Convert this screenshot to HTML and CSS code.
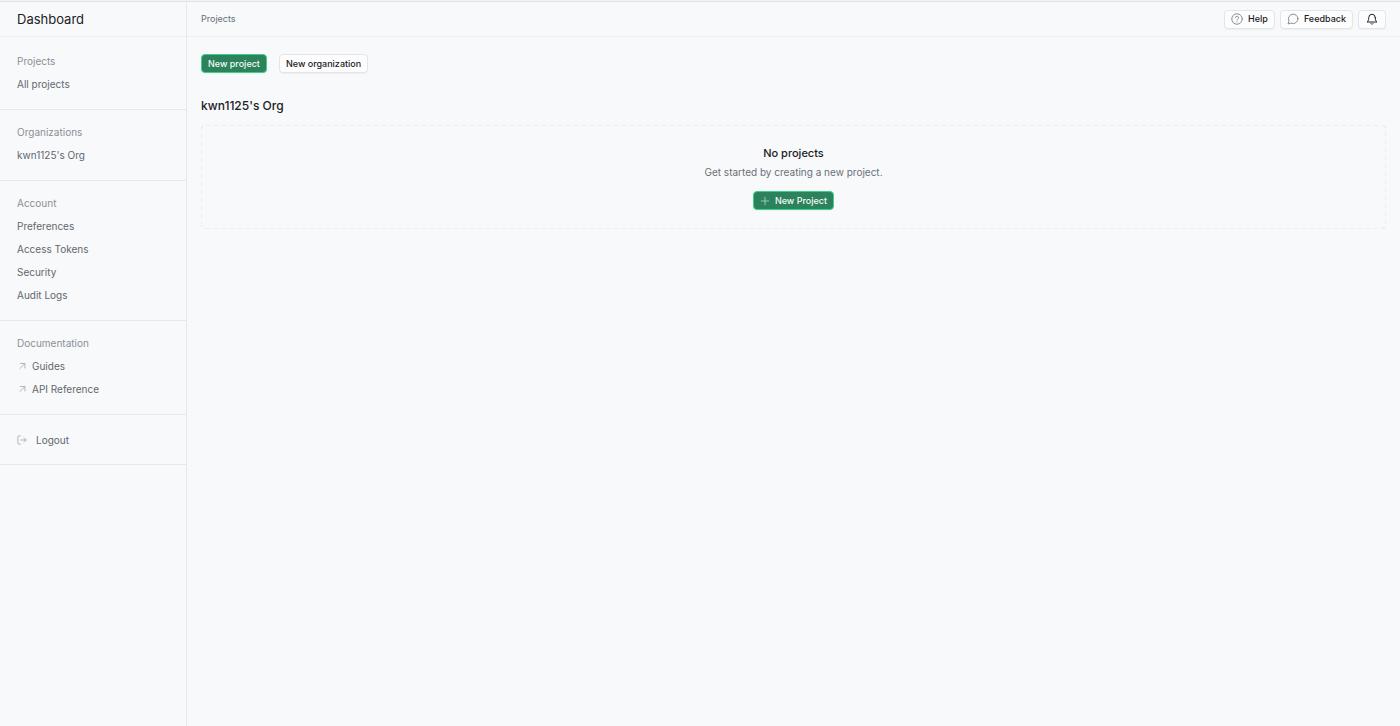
FILE: index.html
```html
<!DOCTYPE html>
<html lang="en">
<head>
<meta charset="utf-8">
<title>Projects</title>
<link rel="stylesheet" href="styles.css">
</head>
<body>
<div class="app">
  <aside class="sidebar">
    <h1 class="brand">Dashboard</h1>
    <nav>
      <section class="group group-first">
        <h2 class="group-title">Projects</h2>
        <a class="link" href="#">All projects</a>
      </section>
      <section class="group">
        <h2 class="group-title">Organizations</h2>
        <a class="link" href="#">kwn1125's Org</a>
      </section>
      <section class="group">
        <h2 class="group-title">Account</h2>
        <a class="link" href="#">Preferences</a>
        <a class="link" href="#">Access Tokens</a>
        <a class="link" href="#">Security</a>
        <a class="link" href="#">Audit Logs</a>
      </section>
      <section class="group">
        <h2 class="group-title">Documentation</h2>
        <a class="link link-out" href="#"><svg class="icon" width="10" height="10" viewBox="0 0 24 24"><path d="M7 18 19 6M8 6h11v11"/></svg>Guides</a>
        <a class="link link-out" href="#"><svg class="icon" width="10" height="10" viewBox="0 0 24 24"><path d="M7 18 19 6M8 6h11v11"/></svg>API Reference</a>
      </section>
      <section class="group group-last">
        <button class="link logout" type="button"><svg class="icon" width="10" height="10" viewBox="0 0 24 24"><path d="M8 22H5a3 3 0 0 1-3-3V5a3 3 0 0 1 3-3h3M17 17l5-5-5-5M22 12H9"/></svg>Logout</button>
      </section>
    </nav>
  </aside>
  <div class="page">
    <header class="topbar">
      <span class="crumb">Projects</span>
      <div class="actions">
        <button class="button" type="button"><svg class="icon icon-soft" width="12" height="12" viewBox="0 0 24 24"><circle cx="12" cy="12" r="10.5"/><path d="M9 9a3 3 0 0 1 6 1c0 2-3 2.500-3 4M12 17.500v.500"/></svg>Help</button>
        <button class="button" type="button"><svg class="icon icon-soft" width="12" height="12" viewBox="0 0 24 24"><path d="M22 11.500a9.500 9.500 0 0 1-9.500 9.500 10 10 0 0 1-4.500-1L2 22l2-6a9.500 9.500 0 1 1 18-4.500z"/></svg>Feedback</button>
        <button class="button button-icon" type="button" aria-label="Notifications"><svg class="icon" width="12" height="12" viewBox="0 0 24 24"><path d="M18.500 9a6.500 6.500 0 0 0-13 0c0 6-1.500 7.500-3.500 9h20c-2-1.500-3.500-3-3.500-9M10 21.500c1 1.500 3 1.500 4 0"/></svg></button>
      </div>
    </header>
    <main class="content">
      <div class="toolbar">
        <button class="button button-primary" type="button">New project</button>
        <button class="button" type="button">New organization</button>
      </div>
      <h2 class="org">kwn1125's Org</h2>
      <section class="empty">
        <svg class="outline" aria-hidden="true"><rect width="100%" height="100%" rx="5"/></svg>
        <h3 class="empty-title">No projects</h3>
        <p class="empty-text">Get started by creating a new project.</p>
        <button class="button button-primary" type="button"><svg class="icon icon-plus" width="10" height="10" viewBox="0 0 24 24"><path d="M12 3v18M3 12h18"/></svg>New Project</button>
      </section>
    </main>
  </div>
</div>
</body>
</html>
```
FILE: styles.css
```css
* { box-sizing: border-box; }
body {
  margin: 0;
  background: #f8f9fb;
  color: #1c2024;
  font-family: Inter, "Liberation Sans", sans-serif;
  font-size: 10px;
  line-height: 16px;
}
h1, h2, h3, p { margin: 0; font-weight: 500; }
button { font: inherit; cursor: pointer; }
.app {
  display: flex;
  min-height: 100vh;
  border-top: 1px solid #f1f2f4;
}
.sidebar {
  flex: 0 0 187px;
  border-right: 1px solid #e6e8eb;
  border-top: 1px solid #dfe1e3;
}
.brand {
  height: 35px;
  padding-left: 17px;
  border-bottom: 1px solid #eceef0;
  font-size: 13px;
  font-weight: 400;
  line-height: 34px;
}
.group {
  padding: 10px 17px 14px;
  border-bottom: 1px solid #e6e8eb;
}
.group-first { padding-top: 12px; }
.group-last { padding: 13px 17px; }
.group-title, .link {
  display: flex;
  align-items: center;
  height: 23px;
  font-size: 10px;
  font-weight: 400;
}
.group-title { color: #889096; }
.link { color: #60686e; text-decoration: none; }
.link-out { gap: 5px; }
.logout {
  gap: 9px;
  padding: 0;
  border: 0;
  background: none;
}
.icon {
  flex: none;
  fill: none;
  stroke: currentColor;
  stroke-width: 2;
  stroke-linecap: round;
  stroke-linejoin: round;
}
.link .icon { color: #a4aab0; }
.page { flex: 1; min-width: 0; border-top: 1px solid #dfe1e3; }
.topbar {
  display: flex;
  align-items: center;
  justify-content: space-between;
  height: 35px;
  padding: 0 14px;
  border-bottom: 1px solid #eceef0;
}
.crumb { color: #687076; font-size: 9px; }
.actions { display: flex; gap: 5px; }
.button {
  display: inline-flex;
  align-items: center;
  gap: 5px;
  height: 19px;
  padding: 0 6px;
  border: 1px solid #e3e5e8;
  border-radius: 4px;
  background: #fdfdfe;
  box-shadow: 0 1px 1px #0000000a;
  color: #1c2024;
  font-size: 9px;
  font-weight: 500;
}
.button-primary {
  border-color: #3dcf8e;
  background: #2b825b;
  color: #f5fbf8;
}
.button-icon { padding: 0 7px; }
.icon-soft { color: #899096; }
.icon-plus { color: #a9d5c0; }
.content { padding: 17px 14px; }
.toolbar { display: flex; gap: 12px; }
.toolbar .button { padding: 0 6px; }
.org { margin: 22px 0 8px; font-size: 12px; line-height: 22px; }
.empty {
  position: relative;
  display: flex;
  flex-direction: column;
  align-items: center;
  padding: 19px 16px;
}
.outline {
  position: absolute;
  inset: 0;
  width: 100%;
  height: 100%;
  fill: none;
  stroke: #eceef0;
  stroke-width: 2;
  stroke-dasharray: 5 3;
}
.empty-title { font-size: 11px; line-height: 18px; }
.empty-text { margin: 2px 0 11px; color: #687076; font-weight: 400; }
.empty .button { position: relative; }
```
